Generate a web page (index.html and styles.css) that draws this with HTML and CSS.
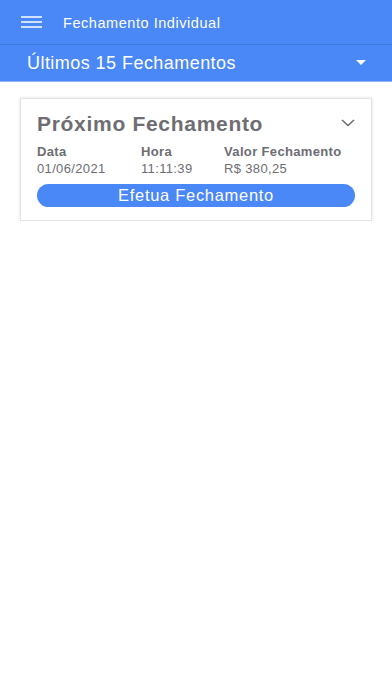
FILE: index.html
```html
<!DOCTYPE html>
<html lang="pt">

<head>
    <meta charset="UTF-8">
    <title>Fechamento Individual</title>
    <link rel="stylesheet" href="styles.css">
</head>

<body>
    <div class="topbar">
        <div class="menu">
            <span></span>
            <span></span>
            <span></span>
        </div>
        <h1>Fechamento Individual</h1>
    </div>
    <div class="select">
        <span>Últimos 15 Fechamentos</span>
        <i class="caret"></i>
    </div>

    <div class="card">
        <div class="card-head">
            <h2>Próximo Fechamento</h2>
            <svg class="chev" width="14" height="8" viewBox="0 0 14 8">
                <path d="M1 1 L7 6.5 L13 1" fill="none" stroke="#6d6d72" stroke-width="1.6" />
            </svg>
        </div>
        <div class="cols">
            <div class="col">
                <b>Data</b>
                <span>01/06/2021</span>
            </div>
            <div class="col">
                <b>Hora</b>
                <span>11:11:39</span>
            </div>
            <div class="col">
                <b>Valor Fechamento</b>
                <span>R$ 380,25</span>
            </div>
        </div>
        <button class="btn">Efetua Fechamento</button>
    </div>
</body>

</html>
```

FILE: styles.css
```css
* {
    padding: 0;
    margin: 0;
    box-sizing: border-box;
}

body {
    font-family: "Liberation Sans", Arial, sans-serif;
    background: #fff;
    width: 392px;
}

.topbar {
    height: 45px;
    background: #4a87f7;
    display: flex;
    align-items: center;
    border-bottom: 1px solid #4279e0;
}

.menu {
    width: 21px;
    margin-left: 21px;
    display: flex;
    flex-direction: column;
    gap: 3.3px;
}

.menu span {
    display: block;
    height: 1.5px;
    background: rgba(255, 255, 255, 0.75);
}

.topbar h1 {
    font-size: 14.5px;
    letter-spacing: 0.55px;
    font-weight: normal;
    color: #fff;
    margin-left: 21px;
    margin-top: 1px;
}

.select {
    height: 37px;
    background: #4a87f7;
    border-bottom: 1.5px solid #8fb6fb;
    display: flex;
    align-items: center;
    justify-content: space-between;
    padding: 1px 26px 0 27px;
}

.select span {
    font-size: 18px;
    letter-spacing: 0.45px;
    color: #fff;
}

.caret {
    width: 0;
    height: 0;
    border-left: 5px solid transparent;
    border-right: 5px solid transparent;
    border-top: 5px solid #fff;
    margin-top: -2px;
}

.card {
    margin: 16px 20px 0;
    border: 1px solid #e3e3e3;
    box-shadow: 0 0 3px rgba(0, 0, 0, 0.12);
    padding: 13px 16px 13px;
}

.card-head {
    display: flex;
    justify-content: space-between;
    align-items: center;
}

.card-head h2 {
    font-size: 21px;
    letter-spacing: 0.7px;
    color: #6d6d72;
    font-weight: bold;
}

.chev {
    margin-top: -3px;
}

.cols {
    display: flex;
    margin-top: 7px;
}

.col {
    display: flex;
    flex-direction: column;
    font-size: 13px;
    letter-spacing: 0.35px;
    color: #6d6d72;
    line-height: 17px;
}

.col:nth-child(1) {
    width: 104px;
}

.col:nth-child(2) {
    width: 83px;
}

.btn {
    display: block;
    width: 100%;
    height: 23px;
    margin-top: 7px;
    border: none;
    border-radius: 12px;
    background: #4a87f7;
    color: #fff;
    font-family: "Liberation Sans", Arial, sans-serif;
    font-size: 16.5px;
    letter-spacing: 0.7px;
}
```
